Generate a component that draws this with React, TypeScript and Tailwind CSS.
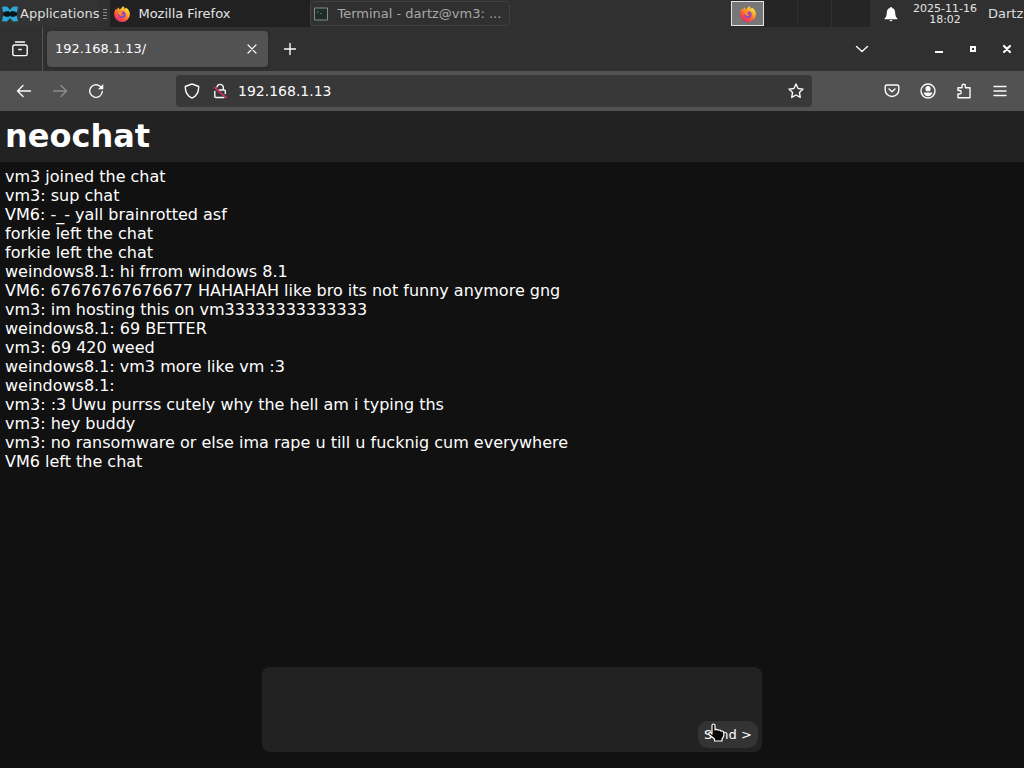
import React from "react";

const messages: string[] = [
  "vm3 joined the chat",
  "vm3: sup chat",
  "VM6: -_- yall brainrotted asf",
  "forkie left the chat",
  "forkie left the chat",
  "weindows8.1: hi frrom windows 8.1",
  "VM6: 67676767676677 HAHAHAH like bro its not funny anymore gng",
  "vm3: im hosting this on vm33333333333333",
  "weindows8.1: 69 BETTER",
  "vm3: 69 420 weed",
  "weindows8.1: vm3 more like vm :3",
  "weindows8.1:",
  "vm3: :3 Uwu purrss cutely why the hell am i typing ths",
  "vm3: hey buddy",
  "vm3: no ransomware or else ima rape u till u fucknig cum everywhere",
  "VM6 left the chat",
];

function Icon({ children }: { children: React.ReactNode }) {
  return (
    <svg viewBox="0 0 16 16" className="size-4 shrink-0" fill="none" stroke="currentColor" strokeWidth="1.4" strokeLinecap="round" strokeLinejoin="round" aria-hidden="true">
      {children}
    </svg>
  );
}

function FirefoxLogo({ id }: { id: string }) {
  return (
    <svg viewBox="0 0 16 16" className="size-4 shrink-0" aria-hidden="true">
      <defs>
        <linearGradient id={id} x1="0.85" y1="0.05" x2="0.2" y2="0.95">
          <stop offset="0" stopColor="#fff04f" />
          <stop offset="0.35" stopColor="#ffab25" />
          <stop offset="0.65" stopColor="#ff5c38" />
          <stop offset="1" stopColor="#e52378" />
        </linearGradient>
      </defs>
      <path d="M9 0c1 1 1.600 2 1.800 3 .6-.3 1-.9 1-1.400 2.600 1.600 4.100 4 4.100 6.700a7.900 7.700 0 0 1-15.800 0C.1 6 .8 4.200 2.200 2.500c0 .6.100 1.100.4 1.500.5-1.200 1.200-2.100 2.200-2.700 0 .9.300 1.600.8 2.200C6.500 2.900 8 1.800 9 0z" fill={`url(#${id})`} />
      <circle cx="8" cy="8.600" r="3.700" fill="#9a46b8" />
      <path d="M3.500 4.300c1.500-.6 3-.2 3.800.9l1.900.2c0 1-1.700 1.200-2 1.900.1 1 1.200 1.500 2.600 1.100-.6 1.400-2.900 1.900-4.300.7-.9-.8-1.300-1.700-1.100-2.700z" fill="#ff8a2a" />
    </svg>
  );
}

function DesktopPanel() {
  return (
    <header className="flex h-[27px] items-stretch overflow-hidden bg-[#303030] text-[13px] whitespace-nowrap text-[#dedede]">
      <button className="flex items-center gap-0.5 bg-[#333] pl-0.5">
        <svg viewBox="0 0 16 16" className="size-4 shrink-0" aria-hidden="true">
          <path d="M0 .8 5 .5 8 4l3-3.500 5 .3-1 5L12 8l3 2.200 1 5-5 .3L8 12l-3 3.500-5-.3 1-5L4 8 1 5.800z" fill="#29a9d8" />
          <path d="M3 5.500 6.500 5 8 6.500 9.500 5l3.500.5L15.500 8 13 10.500 9.500 11 8 9.500 6.500 11 3 10.500.5 8z" fill="#07141b" />
        </svg>
        Applications
      </button>
      <svg viewBox="0 0 4 10" className="ml-1 h-2.5 w-1 shrink-0 self-center" stroke="#8a8a8a" aria-hidden="true">
        <path d="M0 .5h4M0 3.500h4M0 6.500h4M0 9.500h4" />
      </svg>
      <button className="ml-[3px] flex w-[200px] shrink-0 items-center gap-2 bg-[#212121] pl-1 text-[#e4e4e4]">
        <FirefoxLogo id="fox-task" />
        Mozilla Firefox
      </button>
      <button className="my-px flex w-[200px] shrink-0 items-center gap-[9px] rounded-sm border border-[#414141] bg-[#303030] pl-[3px] text-[#a9a9a9]">
        <svg viewBox="0 0 14 14" className="size-3.5 shrink-0" fill="#202b29" stroke="#858d89" aria-hidden="true">
          <path d="M.5 1h13v12H.5z" />
          <path d="m3 4 1.500 1L3 6M6 6.500h2" stroke="#32756a" />
        </svg>
        Terminal - dartz@vm3: ...
      </button>
      <div className="grow" />
      <div className="flex w-[139px] shrink-0 divide-x divide-[#303030] bg-[#252525]">
        <button aria-label="Workspace 1" className="my-px flex w-[33px] items-center justify-center border border-[#e4e4e4] bg-[#777]">
          <FirefoxLogo id="fox-workspace" />
        </button>
        <button aria-label="Workspace 2" className="w-[34px]" />
        <button aria-label="Workspace 3" className="w-[34px]" />
        <button aria-label="Workspace 4" className="grow" />
      </div>
      <button aria-label="Notifications" className="flex w-[42px] shrink-0 items-center justify-center text-white">
        <svg viewBox="0 0 14 16" className="h-4 w-3.5" fill="currentColor" aria-hidden="true">
          <path d="M7 1c.7 0 1 .5 1 1 2.200.5 3.200 2.300 3.200 4.700 0 3 .8 4.300 2.200 5.800v.8H.6v-.8C2 11 2.800 9.700 2.800 6.700 2.800 4.300 3.800 2.500 6 2c0-.5.3-1 1-1zM5.300 14h3.400L7 15.500z" />
        </svg>
      </button>
      <time className="flex w-[66px] shrink-0 flex-col justify-center text-center text-[11px] leading-[11px] text-[#e4e4e4]">
        <span>2025-11-16</span>
        <span>18:02</span>
      </time>
      <button className="w-[46px] shrink-0 overflow-hidden pl-2.5 text-left">Dartz</button>
    </header>
  );
}

function TabStrip() {
  return (
    <div className="flex h-11 items-center bg-[#303030] text-[#fbfbfe]">
      <button aria-label="Firefox View" className="flex h-full w-[43px] items-center justify-center border-r border-[#555] pr-0.5">
        <Icon>
          <path d="M3.500 1h9M2.500 4h11a1.700 1.700 0 0 1 1.700 1.700v7.200a1.700 1.700 0 0 1-1.700 1.700h-11a1.700 1.700 0 0 1-1.700-1.700V5.700A1.700 1.700 0 0 1 2.500 4zM6.800 8.500h2.400" />
        </Icon>
      </button>
      <div className="ml-1 flex h-9 w-[221px] items-center justify-between rounded-sm bg-[#525252] pr-2 pl-2 text-[13px] shadow-sm">
        <span>192.168.1.13/</span>
        <button aria-label="Close tab">
          <Icon><path d="m4 4 8 8m0-8-8 8" strokeWidth="1.200" /></Icon>
        </button>
      </div>
      <button aria-label="New tab" className="ml-3.5">
        <Icon><path d="M8 2.500v11M2.500 8h11" /></Icon>
      </button>
      <div className="grow" />
      <button aria-label="List all tabs" className="mr-[61px]">
        <Icon><path d="m2.500 5.500 5.500 5 5.500-5" /></Icon>
      </button>
      <div className="flex items-center gap-[18px] pr-[9px]">
        <button aria-label="Minimize">
          <Icon><path d="M5 11h6" strokeWidth="2" strokeLinecap="square" /></Icon>
        </button>
        <button aria-label="Maximize">
          <Icon><path d="M6 6h4v4H6z" strokeWidth="2" strokeLinejoin="miter" /></Icon>
        </button>
        <button aria-label="Close window">
          <Icon><path d="m5 5 6 6M11 5l-6 6" strokeWidth="2.200" /></Icon>
        </button>
      </div>
    </div>
  );
}

function NavBar() {
  return (
    <nav className="flex h-10 items-center bg-[#525252] text-[#fbfbfe]">
      <div className="flex gap-5 pl-4">
        <button aria-label="Back"><Icon><path d="M14.500 8h-13M7 2.500 1.500 8 7 13.500" /></Icon></button>
        <button aria-label="Forward" className="text-[#8d8d8f]"><Icon><path d="M1.500 8h13M9 2.500 14.500 8 9 13.500" /></Icon></button>
        <button aria-label="Reload">
          <Icon>
            <path d="M14.300 8.500A6.300 6.300 0 1 1 12 3.200L13.300 4.600" />
            <path d="M15.300 1v5.300H10z" fill="currentColor" stroke="none" />
          </Icon>
        </button>
      </div>
      <div className="mr-[72px] ml-18 flex h-8 grow items-center rounded-sm bg-[#383838] px-2">
        <Icon><path d="M8 1 2.500 3 1.300 3.500C1.200 9 3.500 13.200 8 15c4.500-1.800 6.800-6 6.700-11.500L13.500 3z" /></Icon>
        <svg viewBox="0 0 16 16" className="ml-3 size-4 shrink-0" fill="none" stroke="currentColor" strokeWidth="1.400" strokeLinecap="round" aria-hidden="true">
          <path d="M5 3.800A3.200 3.200 0 0 1 11.300 4.500V7h1M2.800 8.500v5a1 1 0 0 0 1 1h8M7 7h5.300a1 1 0 0 1 1 1v2.500" />
          <path d="m2.500 4.500 11.500 10" stroke="#c8325c" strokeWidth="1.700" />
        </svg>
        <input aria-label="Address" defaultValue="192.168.1.13" className="mx-2.5 w-20 grow bg-transparent text-sm outline-none" />
        <button aria-label="Bookmark this page">
          <Icon><path d="m8 1 2.100 4.500 4.900.6-3.600 3.400.9 4.900L8 12l-4.300 2.400.9-4.900L1 6.100l4.900-.6z" /></Icon>
        </button>
      </div>
      <div className="flex gap-5 pr-4">
        <button aria-label="Save to Pocket">
          <Icon><path d="M2.500 2h11a1.300 1.300 0 0 1 1.300 1.300V7A6.800 6.500 0 0 1 1.200 7V3.300A1.300 1.300 0 0 1 2.500 2zM5 6l3 2.800L11 6" /></Icon>
        </button>
        <button aria-label="Account">
          <Icon>
            <circle cx="8" cy="8" r="7" />
            <circle cx="8" cy="5.700" r="2.600" fill="currentColor" stroke="none" />
            <path d="M3.700 9.500h8.600c0 2-1.800 3.700-4.300 3.700S3.700 11.500 3.700 9.500z" fill="currentColor" stroke="none" />
          </Icon>
        </button>
        <button aria-label="Extensions">
          <Icon><path d="M2 14.700V11h1.500a1.500 1.500 0 0 0 0-3.500H2V4.700h4V3a1.700 1.700 0 0 1 3.400 0v1.700H14v10z" /></Icon>
        </button>
        <button aria-label="Open application menu">
          <Icon><path d="M2 3.500h12M2 8h12M2 12.500h12" /></Icon>
        </button>
      </div>
    </nav>
  );
}

function HandCursor() {
  return (
    <svg viewBox="0 0 19 19" className="pointer-events-none absolute top-0.5 left-2.5 size-[19px]" fill="#080808" stroke="#fff" strokeWidth="1.200" strokeLinejoin="round" aria-hidden="true">
      <path d="M4 11V2.500a1.500 1.500 0 0 1 3 0V7c.5-1 2.800-.8 3.200.3.900-.6 2.500-.2 2.800.8 1.300-.4 2.800.3 2.800 1.500V13L14 16v2H6.500v-2L1 11.500c-.8-1.500.6-2.700 1.800-1.700z" />
    </svg>
  );
}

export default function App() {
  return (
    <div className="flex min-h-screen flex-col bg-[#111] font-['DejaVu_Sans',sans-serif] text-white">
      <DesktopPanel />
      <TabStrip />
      <NavBar />
      <main className="flex grow flex-col">
        <h1 className="bg-[#222] px-[5px] pt-1.5 pb-[7px] text-[32px] leading-[38px] font-bold">neochat</h1>
        <ul className="grow px-[5px] pt-[5px] text-base leading-[19px]">
          {messages.map((message, index) => (
            <li key={index}>{message}</li>
          ))}
        </ul>
        <form className="relative mx-auto mb-4 h-[85px] w-full max-w-[500px] rounded-lg bg-[#222]" onSubmit={(event) => event.preventDefault()}>
          <textarea aria-label="Message" className="block size-full resize-none rounded-lg bg-transparent p-2.5 outline-none" />
          <div className="absolute right-1 bottom-1">
            <button className="h-[27px] w-[60px] rounded-[10px] bg-[#333] text-[13px]">Send &gt;</button>
            <HandCursor />
          </div>
        </form>
      </main>
    </div>
  );
}
